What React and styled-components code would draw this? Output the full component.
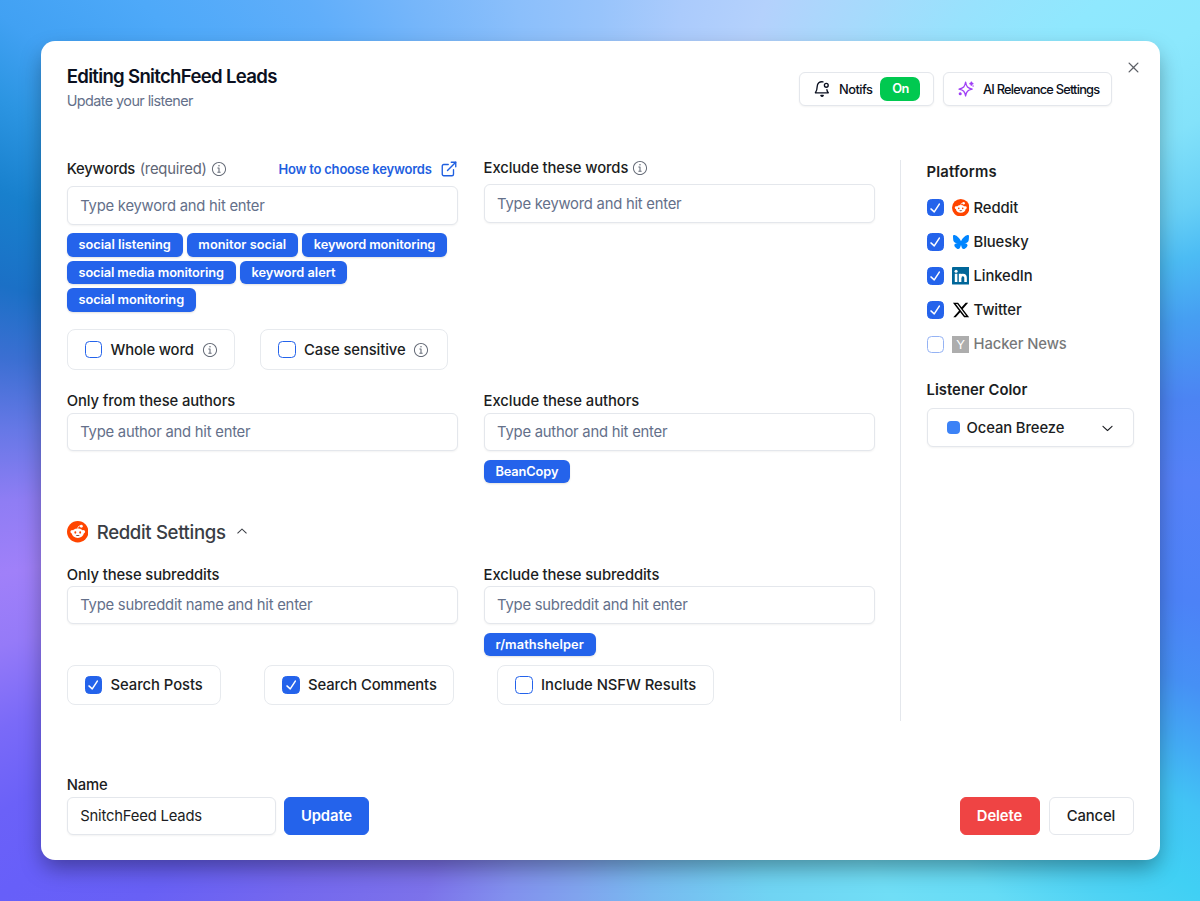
import React from "react";
import styled, { createGlobalStyle, css } from "styled-components";
import { RxInfoCircled, RxCheck, RxChevronDown, RxChevronUp, RxCross2 } from "react-icons/rx";
import { FaBluesky, FaXTwitter } from "react-icons/fa6";
import { ExternalLink } from "lucide-react";

// wallpaper colours, listed clockwise as points around the window edge
const wallpaper = [
  [600, 20, "#98c4fb"],
  [680, 20, "#abcbfc"],
  [760, 20, "#b4d1fc"],
  [860, 20, "#a6dafc"],
  [960, 20, "#98e2fd"],
  [1080, 20, "#8fe8fe"],
  [1180, 40, "#8ce8fd"],
  [1180, 130, "#83e2fa"],
  [1180, 210, "#68d0f6"],
  [1180, 260, "#4cbcf4"],
  [1180, 320, "#469ff2"],
  [1180, 400, "#4c84f3"],
  [1180, 480, "#5581f8"],
  [1180, 600, "#4c82f7"],
  [1180, 680, "#4690f5"],
  [1180, 740, "#43a9f5"],
  [1180, 800, "#42c4f5"],
  [1180, 880, "#40d0f4"],
  [1080, 880, "#4fd3f4"],
  [980, 880, "#66dcf6"],
  [880, 880, "#70def6"],
  [765, 880, "#70d4f3"],
  [650, 880, "#78baf0"],
  [580, 880, "#80a4ee"],
  [510, 880, "#8290ee"],
  [430, 880, "#7c72ea"],
  [300, 880, "#7468ee"],
  [160, 880, "#6860f5"],
  [20, 880, "#675ff9"],
  [20, 800, "#6b61f8"],
  [20, 720, "#7a6af8"],
  [20, 640, "#957af8"],
  [20, 570, "#a080f9"],
  [20, 500, "#8f7df4"],
  [20, 430, "#6678e6"],
  [20, 360, "#3b6fd2"],
  [20, 290, "#1b70c6"],
  [20, 200, "#1880cd"],
  [20, 110, "#2c95e2"],
  [20, 30, "#41a1f3"],
  [160, 20, "#4ea9f9"],
  [320, 20, "#60aefa"],
  [420, 20, "#76b6fa"],
  [520, 20, "#8bbffb"],
];

const stops = wallpaper
  .map(([x, y, color]) => {
    const deg = (Math.atan2(x - 600, 450 - y) * 180) / Math.PI;
    return `${color} ${((deg + 360) % 360).toFixed(2)}deg`;
  })
  .concat("#98c4fb 360deg")
  .join(", ");

const GlobalStyle = createGlobalStyle`
  * {
    box-sizing: border-box;
  }

  body {
    margin: 0;
    font-family: Inter, "Liberation Sans", sans-serif;
    color: #1b1d22;
  }

  svg {
    display: block;
    flex-shrink: 0;
  }
`;

const Page = styled.div`
  height: 901px;
  padding: 41px 40.5px 0 40.7px;
  overflow: hidden;
  background: conic-gradient(from 0deg at 600px 450px, ${stops});
`;

const Dialog = styled.main`
  display: flex;
  flex-direction: column;
  height: 819px;
  padding: 0 26px;
  border-radius: 14px;
  background: #fff;
  box-shadow: 0 10px 22px -2px rgba(0, 0, 0, 0.36);
`;

const Header = styled.header`
  display: flex;
  justify-content: space-between;
  height: 119px;
`;

const Heading = styled.div`
  padding-top: 23px;
`;

const Title = styled.h1`
  margin: 0;
  font-size: 18.6px;
  font-weight: 600;
  line-height: 25px;
  letter-spacing: -0.69px;
  color: #0b1020;
`;

const Subtitle = styled.p`
  margin: 1px 0 0;
  font-size: 14.4px;
  line-height: 22px;
  letter-spacing: -0.57px;
  color: #64708a;
`;

const Actions = styled.div`
  display: flex;
  align-items: flex-start;
  gap: 9px;
  margin-right: -9.5px;
`;

const outlined = css`
  border: 1px solid #e4e7ec;
  background: #fff;
  box-shadow: 0 1px 2px rgba(0, 0, 0, 0.05);
`;

const HeaderButton = styled.button`
  ${outlined}
  display: flex;
  align-items: center;
  width: ${(p) => p.$width}px;
  height: 34px;
  margin-top: 31px;
  padding: 0 0 0 13px;
  border-radius: 6px;
  font: 500 12.8px Inter, sans-serif;
  letter-spacing: ${(p) => p.$spacing}px;
  color: #0b1020;
  white-space: nowrap;

  svg {
    margin-right: 8px;
  }
`;

const OnBadge = styled.span`
  width: 40px;
  margin-left: 8px;
  border-radius: 7px;
  background: #00c950;
  color: #fff;
  font-weight: 600;
  line-height: 24px;
  text-align: center;
`;

const Close = styled.button`
  width: 22px;
  height: 18px;
  margin-top: 17px;
  padding: 0 0 0 4px;
  border: 0;
  background: none;
  color: #5d6067;
`;

const Body = styled.div`
  display: flex;
  height: 561px;
`;

const Form = styled.div`
  width: 834px;
  border-right: 1px solid #e4e7ec;
`;

const Section = styled.section`
  display: grid;
  grid-template-columns: 391px 391px;
  column-gap: 25.9px;
  align-content: start;
  height: ${(p) => p.$height}px;
`;

const Label = styled.div`
  display: flex;
  align-items: center;
  height: ${(p) => p.$height}px;
  padding-top: ${(p) => p.$top ?? 1}px;
  padding-bottom: ${(p) => p.$bottom ?? 0}px;
  font-size: 14.8px;
  font-weight: 500;
  letter-spacing: ${(p) => p.$spacing ?? -0.1}px;
  white-space: nowrap;

  svg {
    margin-left: 4px;
    color: #666c78;
  }
`;

const Muted = styled.span`
  margin-left: 4.5px;
  font-weight: 400;
  color: #5f6675;
`;

const HelpLink = styled.a`
  display: flex;
  align-items: center;
  margin-left: auto;
  font-size: 13px;
  font-weight: 600;
  letter-spacing: -0.2px;
  color: #1f5fe0;

  svg {
    margin-left: 8px;
    color: inherit;
  }
`;

const Input = styled.input`
  ${outlined}
  display: block;
  width: ${(p) => p.$width ?? 391}px;
  height: 38.5px;
  padding: 1px 12.5px 0;
  border-radius: 6px;
  outline: 0;
  font: 400 14.8px Inter, sans-serif;
  letter-spacing: ${(p) => p.$spacing ?? -0.23}px;
  color: #1b1d22;

  &::placeholder {
    color: #64708a;
  }
`;

const Tags = styled.div`
  display: flex;
  flex-wrap: wrap;
  gap: 4px;
  margin-top: 8.5px;
`;

const Tag = styled.span`
  height: 23.7px;
  padding: 0 11.8px;
  border-radius: 6px;
  background: #2463eb;
  box-shadow: 0 1px 2px rgba(0, 0, 0, 0.12);
  color: #fff;
  font-size: 12.8px;
  font-weight: 600;
  line-height: 23px;
  letter-spacing: ${(p) => p.$spacing ?? -0.1}px;
  white-space: nowrap;
`;

const Options = styled.div`
  display: flex;
  gap: ${(p) => p.$gap}px;
  margin-top: ${(p) => p.$top ?? 0}px;
`;

const Option = styled.label`
  display: flex;
  align-items: center;
  width: ${(p) => p.$width}px;
  height: 40.5px;
  padding-left: 16.9px;
  border: 1px solid #e7eaee;
  border-radius: 8px;
  font-size: 14.8px;
  font-weight: 500;
  letter-spacing: ${(p) => p.$spacing ?? -0.1}px;
  white-space: nowrap;

  > svg {
    margin-left: 8px;
    color: #666c78;
  }
`;

const Box = styled.span`
  display: flex;
  align-items: center;
  justify-content: center;
  flex-shrink: 0;
  width: 17.5px;
  height: 17.5px;
  margin-right: 8.5px;
  border: 1px solid #2463eb;
  border-radius: 4.5px;
  background: ${(p) => (p.$checked ? "#2463eb" : "#fff")};
  color: #fff;
`;

const GroupTitle = styled.h2`
  display: flex;
  align-items: center;
  height: 43px;
  margin: 0;
  font-size: 18.6px;
  font-weight: 500;
  letter-spacing: -0.35px;
  color: #3a3d44;

  span {
    margin: 0 8.5px;
  }
`;

const Sidebar = styled.aside`
  width: 207px;
  margin-left: 26px;
`;

const SideTitle = styled.h3`
  height: 23px;
  margin: 0;
  font-size: 14.8px;
  font-weight: 600;
  line-height: 24px;
  letter-spacing: ${(p) => p.$spacing}px;
`;

const PlatformList = styled.div`
  margin: 7.5px 0 16.5px;
`;

const Platform = styled.label`
  display: flex;
  align-items: center;
  height: 34.2px;
  font-size: 14.8px;
  font-weight: 500;
  letter-spacing: -0.08px;
  opacity: ${(p) => (p.$off ? 0.6 : 1)};

  ${Box} {
    opacity: ${(p) => (p.$off ? 0.8 : 1)};
    margin-right: 7.5px;
  }
`;

const PlatformIcon = styled.span`
  display: flex;
  justify-content: center;
  width: 18px;
  margin-right: 4px;
`;

const NewsBadge = styled.b`
  width: 17.5px;
  height: 17.5px;
  background: #777;
  color: #fff;
  font: 400 13px/18px "Liberation Sans", sans-serif;
  text-align: center;
`;

const Select = styled.button`
  ${outlined}
  display: flex;
  align-items: center;
  width: 207px;
  height: 38.5px;
  margin-top: 7.5px;
  padding: 0 17px 0 19px;
  border-radius: 6px;
  font: 500 14.8px Inter, sans-serif;
  letter-spacing: -0.1px;
  color: #1b1d22;

  svg {
    margin-left: auto;
  }
`;

const Swatch = styled.i`
  width: 13px;
  height: 13px;
  margin-right: 7px;
  border-radius: 4px;
  background: #3c82f6;
`;

const Footer = styled.footer`
  display: flex;
  align-items: flex-end;
  height: 73px;
  margin-top: auto;
  margin-bottom: 25px;
`;

const Button = styled.button`
  width: ${(p) => p.$width}px;
  height: 38.5px;
  margin-left: ${(p) => p.$left};
  padding: 0;
  border: 1px solid ${(p) => p.$border ?? p.$color};
  border-radius: 6px;
  background: ${(p) => p.$color};
  color: ${(p) => p.$text ?? "#fff"};
  font: ${(p) => p.$weight ?? 600} 14.8px Inter, sans-serif;
  letter-spacing: -0.1px;
`;

const RedditIcon = ({ size }) => (
  <svg width={size} height={size} viewBox="0 0 24 24">
    <circle cx="12" cy="12" r="12" fill="#ff4500" />
    <path d="M12 8.6c.2-2.3 1-3.2 3-3.1" fill="none" stroke="#fff" strokeWidth="1" />
    <g fill="#fff">
      <circle cx="16" cy="5.8" r="1.6" />
      <circle cx="5.8" cy="12" r="2" />
      <circle cx="18.2" cy="12" r="2" />
      <ellipse cx="12" cy="13.6" rx="6.6" ry="5.3" />
    </g>
    <ellipse cx="9.3" cy="12.8" rx="1.1" ry="1.3" fill="#ff4500" />
    <ellipse cx="14.7" cy="12.8" rx="1.1" ry="1.3" fill="#ff4500" />
    <path d="M9.8 15.8q2.2-.5 4.4 0a2.4 1.7 0 0 1-4.4 0Z" fill="#7a4a40" />
  </svg>
);

const LinkedInIcon = () => (
  <svg width="17.5" height="17.5" viewBox="0 0 24 24">
    <rect width="24" height="24" rx="1.2" fill="#069" />
    <circle cx="5.6" cy="5.7" r="2.1" fill="#fff" />
    <path d="M5.6 9.4v11M11.1 9.4v11" stroke="#fff" strokeWidth="3.5" />
    <path d="M11.3 14.6c0-2.4 1.2-3.7 3.6-3.7 2.6 0 3.7 1.5 3.7 4v5.5" fill="none" stroke="#fff" strokeWidth="3.5" />
  </svg>
);

const BellIcon = () => (
  <svg width="18" height="18" viewBox="0 0 18 18" fill="none" stroke="#0b1020" strokeWidth="1.35" strokeLinecap="round" strokeLinejoin="round">
    <path d="M10 1.8C6.4 1.2 4.3 3.6 4.2 6.6c-.1 3-.4 4.6-1.8 6.2h12.9c-.9-1-1.3-2-1.4-3.2" />
    <circle cx="13.3" cy="5.3" r="1.9" />
    <path d="M7.9 15.5h2.3q-1.1 1.6-2.3 0Z" fill="#0b1020" />
  </svg>
);

const SparkIcon = () => (
  <svg width="18" height="18" viewBox="0 0 18 18" fill="none" stroke="#a040f5" strokeWidth="1.3" strokeLinecap="round" strokeLinejoin="round">
    <path d="M8.6 2.2c.8 4.6 2 5.9 6.6 6.9-4.6 1-5.8 2.3-6.6 6.9-.8-4.6-2-5.9-6.6-6.9 4.6-1 5.8-2.3 6.6-6.9Z" />
    <path d="M14.4 2.3v2.6M13.1 3.6h2.6" strokeWidth="1.7" />
    <circle cx="3.2" cy="13.7" r=".9" fill="#a040f5" />
    <circle cx="16.2" cy="6" r=".2" />
  </svg>
);

const Check = ({ checked }) => (
  <Box $checked={checked}>{checked && <RxCheck size={18} />}</Box>
);

const keywords = [
  { word: "social listening", spacing: 0 },
  { word: "monitor social", spacing: 0.04 },
  { word: "keyword monitoring", spacing: -0.1 },
  { word: "social media monitoring", spacing: -0.1 },
  { word: "keyword alert", spacing: -0.01 },
  { word: "social monitoring", spacing: -0.06 },
];

const platforms = [
  { name: "Reddit", icon: <RedditIcon size={17.5} /> },
  { name: "Bluesky", icon: <FaBluesky size={16} color="#0085ff" /> },
  { name: "LinkedIn", icon: <LinkedInIcon /> },
  { name: "Twitter", icon: <FaXTwitter size={18} color="#000" /> },
  { name: "Hacker News", icon: <NewsBadge>Y</NewsBadge>, off: true },
];

const App = () => (
  <Page>
    <GlobalStyle />
    <Dialog>
      <Header>
        <Heading>
          <Title>Editing SnitchFeed Leads</Title>
          <Subtitle>Update your listener</Subtitle>
        </Heading>
        <Actions>
          <HeaderButton $width={135} $spacing={-0.5}>
            <BellIcon />
            Notifs
            <OnBadge>On</OnBadge>
          </HeaderButton>
          <HeaderButton $width={169} $spacing={-0.77}>
            <SparkIcon />
            AI Relevance Settings
          </HeaderButton>
          <Close aria-label="Close">
            <RxCross2 size={17} />
          </Close>
        </Actions>
      </Header>

      <Body>
        <Form>
          <Section $height={227.5}>
            <div>
              <Label $height={26} $top={0} $bottom={8} $spacing={-0.2}>
                Keywords <Muted>(required)</Muted>
                <RxInfoCircled size={16} />
                <HelpLink>
                  How to choose keywords
                  <ExternalLink size={18} strokeWidth={1.8} />
                </HelpLink>
              </Label>
              <Input placeholder="Type keyword and hit enter" />
              <Tags>
                {keywords.map(({ word, spacing }) => (
                  <Tag key={word} $spacing={spacing}>{word}</Tag>
                ))}
              </Tags>
              <Options $gap={25.5} $top={17.2}>
                <Option $width={168} $spacing={-0.15}>
                  <Check />
                  Whole word
                  <RxInfoCircled size={16} />
                </Option>
                <Option $width={187.5}>
                  <Check />
                  Case sensitive
                  <RxInfoCircled size={16} />
                </Option>
              </Options>
            </div>
            <div>
              <Label $height={24} $top={0} $bottom={8}>
                Exclude these words
                <RxInfoCircled size={16} />
              </Label>
              <Input placeholder="Type keyword and hit enter" />
            </div>
          </Section>

          <Section $height={123}>
            <div>
              <Label $height={25}>Only from these authors</Label>
              <Input placeholder="Type author and hit enter" />
            </div>
            <div>
              <Label $height={25} $spacing={-0.06}>Exclude these authors</Label>
              <Input placeholder="Type author and hit enter" />
              <Tags>
                <Tag>BeanCopy</Tag>
              </Tags>
            </div>
          </Section>

          <GroupTitle>
            <RedditIcon size={21.5} />
            <span>Reddit Settings</span>
            <RxChevronUp size={16} />
          </GroupTitle>
          <Section $height={111}>
            <div>
              <Label $height={32} $top={10}>Only these subreddits</Label>
              <Input placeholder="Type subreddit name and hit enter" />
            </div>
            <div>
              <Label $height={32} $top={10}>Exclude these subreddits</Label>
              <Input placeholder="Type subreddit and hit enter" />
              <Tags>
                <Tag $spacing={0.1}>r/mathshelper</Tag>
              </Tags>
            </div>
          </Section>
          <Options $gap={43}>
            <Option $width={154.5} $spacing={-0.05}>
              <Check checked />
              Search Posts
            </Option>
            <Option $width={190}>
              <Check checked />
              Search Comments
            </Option>
            <Option $width={217} $spacing={-0.04}>
              <Check />
              Include NSFW Results
            </Option>
          </Options>
        </Form>

        <Sidebar>
          <SideTitle $spacing={0.18}>Platforms</SideTitle>
          <PlatformList>
            {platforms.map((p) => (
              <Platform key={p.name} $off={p.off}>
                <Check checked={!p.off} />
                <PlatformIcon>{p.icon}</PlatformIcon>
                {p.name}
              </Platform>
            ))}
          </PlatformList>
          <SideTitle $spacing={0.04}>Listener Color</SideTitle>
          <Select>
            <Swatch />
            Ocean Breeze
            <RxChevronDown size={17} />
          </Select>
        </Sidebar>
      </Body>

      <Footer>
        <div>
          <Label $height={24}>Name</Label>
          <Input $width={209} $spacing={-0.18} defaultValue="SnitchFeed Leads" />
        </div>
        <Button $width={85} $left="8.3px" $color="#2463eb">Update</Button>
        <Button $width={80} $left="auto" $color="#ef4444">Delete</Button>
        <Button $width={85} $left="9px" $color="#fff" $border="#e4e7ec" $text="#1b1d22" $weight={500}>Cancel</Button>
      </Footer>
    </Dialog>
  </Page>
);

export default App;
